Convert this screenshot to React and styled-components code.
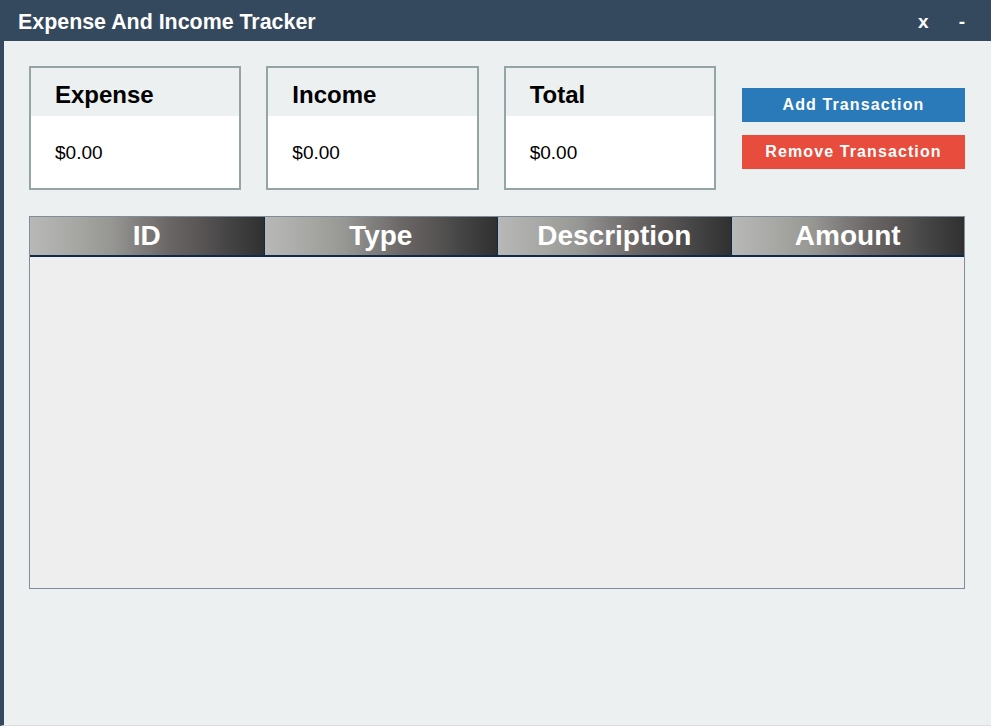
import React from 'react';
import styled, {createGlobalStyle} from "styled-components";

const GlobalStyle = createGlobalStyle`
  html, body {
    margin: 0;
    padding: 0;
    background: #ecf0f1;
    font-family: "Liberation Sans", Arial, sans-serif;
  }
`;

const Frame = styled.div`
  width: 991px;
  height: 726px;
  display: flex;
  flex-direction: column;
  box-sizing: border-box;
  border-left: 4px solid #34495e;
  border-bottom: 1px solid #dcdcdc;
  background: #ecf0f1;
`;
const TitleBar = styled.div`
  height: 41px;
  box-sizing: border-box;
  margin-left: -4px;
  background: #34495e;
  display: flex;
  align-items: center;
  padding: 3px 26px 0 18px;
  color: #fff;
  font-weight: bold;
  font-size: 21.4px;
`;
const Title = styled.div`
  flex: 1;
`;
const WinButton = styled.span`
  margin-left: ${props => props.gap}px;
  font-size: 19px;
`;
const Content = styled.div`
  padding: 25px 26px 0 25px;
  display: flex;
  flex-direction: column;
  gap: 26px;
`;
const TopRow = styled.div`
  display: flex;
  gap: 25px;
`;
const Card = styled.div`
  width: 213px;
  height: 124px;
  box-sizing: border-box;
  border: 2px solid #95a5a6;
  background: #fff;
  display: flex;
  flex-direction: column;
`;
const CardHead = styled.div`
  height: 48px;
  box-sizing: border-box;
  padding: 5px 0 0 24px;
  background: #ecf0f1;
  display: flex;
  align-items: center;
  font-size: 24px;
  font-weight: bold;
  color: #000;
`;
const CardValue = styled.div`
  flex: 1;
  padding: 2px 0 0 24px;
  display: flex;
  align-items: center;
  font-size: 19px;
  color: #000;
`;
const ButtonCol = styled.div`
  display: flex;
  flex-direction: column;
  gap: 13px;
  padding-top: 22px;
  margin-left: 1px;
`;
const ActionButton = styled.button`
  width: 223px;
  height: 34px;
  border: none;
  background: ${props => props.bg};
  color: #fff;
  font-family: "Liberation Sans", Arial, sans-serif;
  font-weight: bold;
  font-size: 16px;
  letter-spacing: 1.1px;
  padding: 0;
`;
const Table = styled.div`
  width: 936px;
  height: 373px;
  box-sizing: border-box;
  border: 1px solid #7f8c99;
  background: #eeeeee;
  display: flex;
  flex-direction: column;
`;
const HeaderRow = styled.div`
  display: grid;
  grid-template-columns: repeat(4, 1fr);
  border-bottom: 2px solid #0e2a47;
  height: 38px;
`;
const HeaderCell = styled.div`
  background: linear-gradient(to right, #b8b8b8 0%, #a6a6a3 20%, #969693 35%, #7e7c7b 48%, #6a6565 60%, #5a5656 72%, #444 85%, #303030 100%);
  border-left: ${props => props.first ? 'none' : '1px solid #0e2a47'};
  color: #fff;
  font-weight: bold;
  font-size: 28px;
  display: flex;
  align-items: center;
  justify-content: center;
`;

const columns = ["ID", "Type", "Description", "Amount"];
const cards = ["Expense", "Income", "Total"];

const App = () => {
  return (
    <Frame>
      <GlobalStyle />
      <TitleBar>
        <Title>Expense And Income Tracker</Title>
        <WinButton gap={0}>x</WinButton>
        <WinButton gap={30}>-</WinButton>
      </TitleBar>
      <Content>
        <TopRow>
          {cards.map((c) => (
            <Card key={c}>
              <CardHead>{c}</CardHead>
              <CardValue>$0.00</CardValue>
            </Card>
          ))}
          <ButtonCol>
            <ActionButton bg="#2a7aba">Add Transaction</ActionButton>
            <ActionButton bg="#e74c3c">Remove Transaction</ActionButton>
          </ButtonCol>
        </TopRow>
        <Table>
          <HeaderRow>
            {columns.map((col, i) => (
              <HeaderCell key={col} first={i === 0}>{col}</HeaderCell>
            ))}
          </HeaderRow>
        </Table>
      </Content>
    </Frame>
  );
};

export default App;
